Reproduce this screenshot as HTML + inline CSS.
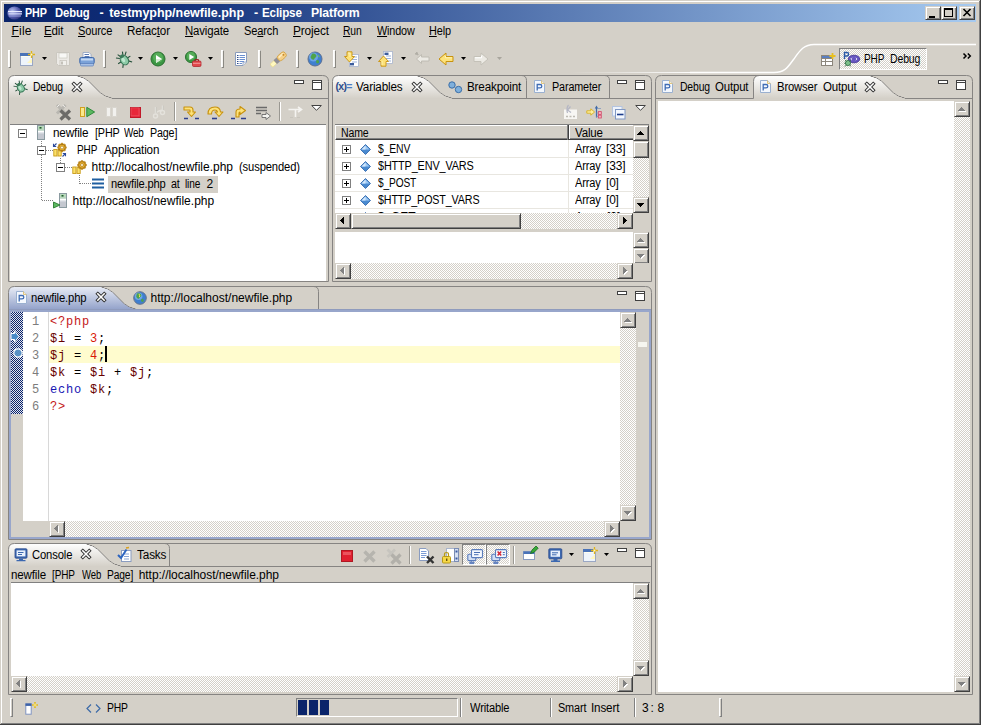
<!DOCTYPE html>
<html><head><meta charset="utf-8"><title>PHP Debug - testmyphp/newfile.php - Eclipse Platform</title>
<style>
html,body{margin:0;padding:0}
body{width:981px;height:725px;overflow:hidden;background:#d4d0c8;position:relative;font:12px/16px 'Liberation Sans', sans-serif;}
body *{position:absolute;box-sizing:border-box}
span{white-space:pre}
u{position:static;text-decoration:underline;text-underline-offset:1px}
svg{overflow:visible}
.dith{background-image:conic-gradient(#fff 25%,#d4d0c8 0 50%,#fff 0 75%,#d4d0c8 0);background-size:2px 2px}
.btn{background:#d4d0c8;border:1px solid;border-color:#d4d0c8 #404040 #404040 #d4d0c8;box-shadow:inset 1px 1px 0 #fff,inset -1px -1px 0 #808080}
</style></head>
<body>
<div style="left:0px;top:0px;width:981px;height:725px;background:#d4d0c8;"></div>
<div style="left:1px;top:1px;width:979px;height:1px;background:#fff;"></div>
<div style="left:1px;top:1px;width:1px;height:723px;background:#fff;"></div>
<div style="left:979px;top:1px;width:1px;height:723px;background:#808080;"></div>
<div style="left:1px;top:723px;width:979px;height:1px;background:#808080;"></div>
<div style="left:980px;top:0px;width:1px;height:725px;background:#404040;"></div>
<div style="left:0px;top:724px;width:981px;height:1px;background:#404040;"></div>
<div style="left:4px;top:4px;width:972px;height:18px;background:linear-gradient(to right,#0a246a 0%,#0f2d78 15%,#a6caf0 100%);"></div>
<svg style="left:7px;top:6px;" width="15" height="14" viewBox="0 0 15 14"><defs><radialGradient id="eg" cx="35%" cy="35%" r="75%"><stop offset="0" stop-color="#b9c3ee"/><stop offset=".55" stop-color="#5a63b4"/><stop offset="1" stop-color="#2b2f78"/></radialGradient></defs><ellipse cx="7.5" cy="7" rx="7.2" ry="6.6" fill="url(#eg)"/><rect x="1" y="5" width="14" height="1.2" fill="#e8ecff"/><rect x="1.5" y="7.3" width="13.5" height="1.2" fill="#dfe4ff"/><rect x="2" y="9.6" width="12" height="0.8" fill="#aeb6e8"/></svg>
<span style="left:25px;top:5px;font:bold 12.5px/16px 'Liberation Sans', sans-serif;color:#fff;letter-spacing:-0.15px;transform:scaleX(0.8582);transform-origin:0 0;">PHP</span>
<span style="left:55px;top:5px;font:bold 12.5px/16px 'Liberation Sans', sans-serif;color:#fff;letter-spacing:-0.15px;transform:scaleX(0.9036);transform-origin:0 0;">Debug</span>
<span style="left:99.4px;top:5px;font:bold 12.5px/16px 'Liberation Sans', sans-serif;color:#fff;">-</span>
<span style="left:109.2px;top:5px;font:bold 12.5px/16px 'Liberation Sans', sans-serif;color:#fff;letter-spacing:-0.03px;">testmyphp/newfile.php</span>
<span style="left:253.9px;top:5px;font:bold 12.5px/16px 'Liberation Sans', sans-serif;color:#fff;">-</span>
<span style="left:261.9px;top:5px;font:bold 12.5px/16px 'Liberation Sans', sans-serif;color:#fff;letter-spacing:-0.15px;transform:scaleX(0.9305);transform-origin:0 0;">Eclipse</span>
<span style="left:310.8px;top:5px;font:bold 12.5px/16px 'Liberation Sans', sans-serif;color:#fff;letter-spacing:-0.15px;transform:scaleX(0.9828);transform-origin:0 0;">Platform</span>
<div class="btn" style="left:925px;top:6px;width:16px;height:14px"></div>
<div class="btn" style="left:941px;top:6px;width:16px;height:14px"></div>
<div class="btn" style="left:959px;top:6px;width:16px;height:14px"></div>
<div style="left:929px;top:16px;width:6px;height:2px;background:#000;"></div>
<div style="left:944px;top:8px;width:9px;height:9px;border:1px solid #000;border-top-width:2px"></div>
<svg style="left:963px;top:9px;" width="8" height="7" viewBox="0 0 8 7"><path d="M0.5 0 L7.5 7 M7.5 0 L0.5 7" stroke="#000" stroke-width="1.6"/></svg>
<span style="left:11.4px;top:23px;font:normal 12px/16px 'Liberation Sans', sans-serif;color:#000;letter-spacing:0.25px;"><u>F</u>ile</span>
<span style="left:44px;top:23px;font:normal 12px/16px 'Liberation Sans', sans-serif;color:#000;letter-spacing:-0.15px;transform:scaleX(0.9636);transform-origin:0 0;"><u>E</u>dit</span>
<span style="left:77.7px;top:23px;font:normal 12px/16px 'Liberation Sans', sans-serif;color:#000;letter-spacing:-0.15px;transform:scaleX(0.92);transform-origin:0 0;"><u>S</u>ource</span>
<span style="left:127px;top:23px;font:normal 12px/16px 'Liberation Sans', sans-serif;color:#000;letter-spacing:-0.15px;transform:scaleX(0.9704);transform-origin:0 0;">Refac<u>t</u>or</span>
<span style="left:185px;top:23px;font:normal 12px/16px 'Liberation Sans', sans-serif;color:#000;letter-spacing:-0.15px;transform:scaleX(0.9498);transform-origin:0 0;"><u>N</u>avigate</span>
<span style="left:243.6px;top:23px;font:normal 12px/16px 'Liberation Sans', sans-serif;color:#000;letter-spacing:-0.15px;transform:scaleX(0.9227);transform-origin:0 0;">Se<u>a</u>rch</span>
<span style="left:293px;top:23px;font:normal 12px/16px 'Liberation Sans', sans-serif;color:#000;letter-spacing:-0.15px;transform:scaleX(0.9874);transform-origin:0 0;"><u>P</u>roject</span>
<span style="left:343.3px;top:23px;font:normal 12px/16px 'Liberation Sans', sans-serif;color:#000;letter-spacing:-0.15px;transform:scaleX(0.8611);transform-origin:0 0;"><u>R</u>un</span>
<span style="left:376.7px;top:23px;font:normal 12px/16px 'Liberation Sans', sans-serif;color:#000;letter-spacing:-0.15px;transform:scaleX(0.9013);transform-origin:0 0;"><u>W</u>indow</span>
<span style="left:429px;top:23px;font:normal 12px/16px 'Liberation Sans', sans-serif;color:#000;letter-spacing:-0.15px;transform:scaleX(0.9077);transform-origin:0 0;"><u>H</u>elp</span>
<div style="left:8px;top:50px;width:3px;height:18px;background:#f6f5f2;border-left:1px solid #fff;border-top:1px solid #fff;border-right:1px solid #8a8882;border-bottom:1px solid #8a8882"></div>
<div style="left:103px;top:50px;width:3px;height:18px;background:#f6f5f2;border-left:1px solid #fff;border-top:1px solid #fff;border-right:1px solid #8a8882;border-bottom:1px solid #8a8882"></div>
<div style="left:221px;top:50px;width:3px;height:18px;background:#f6f5f2;border-left:1px solid #fff;border-top:1px solid #fff;border-right:1px solid #8a8882;border-bottom:1px solid #8a8882"></div>
<div style="left:258px;top:50px;width:3px;height:18px;background:#f6f5f2;border-left:1px solid #fff;border-top:1px solid #fff;border-right:1px solid #8a8882;border-bottom:1px solid #8a8882"></div>
<div style="left:296px;top:50px;width:3px;height:18px;background:#f6f5f2;border-left:1px solid #fff;border-top:1px solid #fff;border-right:1px solid #8a8882;border-bottom:1px solid #8a8882"></div>
<div style="left:333px;top:50px;width:3px;height:18px;background:#f6f5f2;border-left:1px solid #fff;border-top:1px solid #fff;border-right:1px solid #8a8882;border-bottom:1px solid #8a8882"></div>
<svg style="left:19px;top:51px;" width="16" height="16" viewBox="0 0 16 16"><rect x="1.5" y="2.5" width="12" height="12" fill="#fffef0" stroke="#9aa7c4"/><rect x="1" y="2" width="10" height="3" fill="#4a73b8"/><rect x="2" y="6" width="11" height="8" fill="#eef4fb"/><path d="M8 12 L13 12 L13 7 Z" fill="#fff6c0"/><path d="M12.5 0 V7 M9 3.5 H16" stroke="#e0b418" stroke-width="1.3"/><path d="M11.5 2.5 L13.5 4.5 M13.5 2.5 L11.5 4.5" stroke="#f0d050" stroke-width="0.9"/><circle cx="12.5" cy="3.5" r="1" fill="#fffbd0"/></svg>
<svg style="left:42px;top:57px;" width="5" height="3" viewBox="0 0 5 3"><path d="M0 0 H5 L2.5 3 Z" fill="#000"/></svg>
<svg style="left:55px;top:51px;" width="16" height="16" viewBox="0 0 16 16"><path d="M1.5 1.5 H14.5 V14.5 H3.5 L1.5 12.5 Z" fill="#eceae6" stroke="#cbc8c0"/><rect x="4" y="2" width="8" height="5" fill="#f8f8f6" stroke="#c4c1b9" stroke-width=".6"/><rect x="5" y="9.5" width="6.5" height="5" fill="#f1f0ec" stroke="#bcb9b1" stroke-width=".6"/><rect x="6" y="10.5" width="2" height="3" fill="#c4c1b9"/></svg>
<svg style="left:79px;top:51px;" width="16" height="16" viewBox="0 0 16 16"><path d="M4 7 V1.5 H10 L12 3.5 V7 Z" fill="#fff" stroke="#8da0c0" stroke-width=".8"/><path d="M5.5 3.5 H10 M5.5 5.5 H10.5" stroke="#5a78b0" stroke-width="1"/><rect x="0.8" y="6.5" width="14.4" height="6.5" rx="1.5" fill="#7ba2d8" stroke="#3d68ac"/><rect x="2" y="7.5" width="12" height="2" fill="#c4d8f2"/><rect x="1.5" y="12.5" width="13" height="2.5" rx="1" fill="#a8c0e4" stroke="#5a80bc" stroke-width=".7"/></svg>
<svg style="left:116px;top:51px;" width="16" height="16" viewBox="0 0 16 16"><g transform="rotate(-32 8 8.5)"><g stroke="#24503a" stroke-width="1.1" fill="none"><path d="M5 5.5 L2 3 M11 5.5 L14 3 M4 9 H0.8 M12 9 H15.2 M5 12 L2.5 15 M11 12 L13.5 15 M6.5 4 L5.2 1 M9.5 4 L10.8 1"/></g><ellipse cx="8" cy="9.3" rx="3.9" ry="4.9" fill="#8ccaa6" stroke="#2e6e4e" stroke-width="1"/><ellipse cx="8" cy="4.6" rx="2.4" ry="1.7" fill="#3c7a5a"/><ellipse cx="7.2" cy="8.6" rx="1.6" ry="2.4" fill="#cdeedb" opacity=".8"/></g></svg>
<svg style="left:138px;top:57px;" width="5" height="3" viewBox="0 0 5 3"><path d="M0 0 H5 L2.5 3 Z" fill="#000"/></svg>
<svg style="left:150px;top:51px;" width="16" height="16" viewBox="0 0 16 16"><circle cx="8" cy="8" r="7" fill="#3b9643" stroke="#2a6e30" stroke-width="1"/><circle cx="8" cy="6.6" r="5" fill="#6cc06a" opacity=".55"/><path d="M6 4 L12 8 L6 12 Z" fill="#fff"/><path d="M6 8 L12 8 L6 12 Z" fill="#d4ecd4"/></svg>
<svg style="left:173px;top:57px;" width="5" height="3" viewBox="0 0 5 3"><path d="M0 0 H5 L2.5 3 Z" fill="#000"/></svg>
<svg style="left:185px;top:51px;" width="16" height="16" viewBox="0 0 16 16"><circle cx="6" cy="6" r="5.6" fill="#3b9643" stroke="#2a6e30" stroke-width=".9"/><circle cx="6" cy="5" r="4" fill="#6cc06a" opacity=".55"/><path d="M4.3 3 L9.2 6 L4.3 9 Z" fill="#fff"/><rect x="7.5" y="10" width="8.5" height="5.5" rx="1.2" fill="#e0484c" stroke="#b02a30" stroke-width=".8"/><path d="M10 10 V8.6 H13.5 V10" fill="none" stroke="#9a1c20" stroke-width="1"/><rect x="8" y="11.8" width="7.5" height="1" fill="#f49a9a"/></svg>
<svg style="left:208px;top:57px;" width="5" height="3" viewBox="0 0 5 3"><path d="M0 0 H5 L2.5 3 Z" fill="#000"/></svg>
<svg style="left:233px;top:51px;" width="16" height="16" viewBox="0 0 16 16"><path d="M2.5 1.5 H13.5 V11 L10 14.5 H2.5 Z" fill="#fff" stroke="#8a9cbc"/><path d="M13.5 11 H10 V14.5" fill="#e6ecf6" stroke="#8a9cbc" stroke-width=".8"/><path d="M6.5 4.5 H12 M6.5 6.5 H12 M6.5 8.5 H12 M6.5 10.5 H11 M6.5 12.5 H9" stroke="#6a8fd0" stroke-width="1"/><path d="M4 4.5 H5.5 M4 6.5 H5.5 M4 8.5 H5.5 M4 10.5 H5.5 M4 12.5 H5.5" stroke="#2c4a8a" stroke-width="1"/></svg>
<svg style="left:270px;top:51px;" width="16" height="16" viewBox="0 0 16 16"><g transform="rotate(-42 8.5 8)"><path d="M-1 6.2 H4 V10.2 H-1 Q-2 8.2 -1 6.2 Z" fill="#fff8c0" stroke="#ecdc84" stroke-width=".6"/><rect x="4" y="5.6" width="4" height="5.2" fill="#908e96"/><rect x="8" y="5.2" width="9.5" height="6" rx="2.6" fill="#f6d088" stroke="#d0a040" stroke-width=".8"/><rect x="9.5" y="6.2" width="6.5" height="1.6" rx=".8" fill="#fdecc0"/><circle cx="15" cy="8.2" r="1" fill="#c88a28"/></g></svg>
<svg style="left:307px;top:51px;" width="16" height="16" viewBox="0 0 16 16"><circle cx="8" cy="8" r="7" fill="#3f7fd0" stroke="#5d6f90" stroke-width="1"/><circle cx="6.5" cy="6" r="4.5" fill="#79b0ec" opacity=".75"/><path d="M5 3 C7 2 9 3 9.5 5 C9 7 7.5 6.5 7 8.5 C6 9.5 4 8 3.5 6 Z" fill="#4ea34a"/><path d="M9.5 9 C11.5 8.5 12.5 10 12 11.5 C11 13 9.5 12.5 9 11 Z" fill="#4ea34a"/><path d="M10.5 3.5 C12 4 13 5.5 12.5 6.5 C11.5 6.5 10.5 5 10.5 3.5Z" fill="#6dbb5e"/></svg>
<svg style="left:344px;top:51px;" width="16" height="16" viewBox="0 0 16 16"><rect x="5.5" y="3.5" width="9" height="12" fill="#fff" stroke="#a8b4cc" stroke-width=".8"/><path d="M8 6 H13 M8 8.5 H13 M8 11 H13" stroke="#9db3dc" stroke-width="1"/><rect x="6" y="12" width="4" height="2.4" fill="#3c5c9c"/><path d="M3 0.8 H8 V5.5 H10.5 L5.5 11 L0.5 5.5 H3 Z" fill="#fde27a" stroke="#c8920e" stroke-width=".9"/><path d="M4 2 H6 V6" stroke="#fff3b0" stroke-width="1" fill="none"/></svg>
<svg style="left:367px;top:57px;" width="5" height="3" viewBox="0 0 5 3"><path d="M0 0 H5 L2.5 3 Z" fill="#000"/></svg>
<svg style="left:378px;top:51px;" width="16" height="16" viewBox="0 0 16 16"><rect x="5.5" y="0.5" width="9" height="12" fill="#fff" stroke="#a8b4cc" stroke-width=".8"/><path d="M8 5 H13 M8 7.5 H13 M8 10 H13" stroke="#9db3dc" stroke-width="1"/><rect x="6.5" y="1.6" width="4" height="2.4" fill="#3c5c9c"/><path d="M3 15.2 H8 V10.5 H10.5 L5.5 5 L0.5 10.5 H3 Z" fill="#fde27a" stroke="#c8920e" stroke-width=".9"/><path d="M4 14 V10" stroke="#fff3b0" stroke-width="1" fill="none"/></svg>
<svg style="left:401px;top:57px;" width="5" height="3" viewBox="0 0 5 3"><path d="M0 0 H5 L2.5 3 Z" fill="#000"/></svg>
<svg style="left:414px;top:51px;" width="16" height="16" viewBox="0 0 16 16"><path d="M15 6 H7.5 V3.5 L2.5 8 L7.5 12.5 V10 H15 Z" fill="#eceae4" stroke="#bcb9b0" stroke-width=".9"/><path d="M1 3 L3 1 L4 4 Z M2.5 1.5 L4.5 3.5" fill="#b0ada5" stroke="#b0ada5" stroke-width=".7"/></svg>
<svg style="left:438px;top:51px;" width="16" height="16" viewBox="0 0 16 16"><path d="M15 5.5 H8 V2 L1 8 L8 14 V10.5 H15 Z" fill="#fde27a" stroke="#c8920e" stroke-width="1"/><path d="M14 6.8 H7.5 V4.5" stroke="#fff3b0" stroke-width="1" fill="none"/></svg>
<svg style="left:461px;top:57px;" width="5" height="3" viewBox="0 0 5 3"><path d="M0 0 H5 L2.5 3 Z" fill="#000"/></svg>
<svg style="left:473px;top:51px;" width="16" height="16" viewBox="0 0 16 16"><path d="M1 5.5 H8 V2 L15 8 L8 14 V10.5 H1 Z" fill="#eceae4" stroke="#c4c1b8" stroke-width="1"/><path d="M2 6.8 H8.5 V4.5" stroke="#fff" stroke-width="1" fill="none"/></svg>
<svg style="left:497px;top:57px;" width="5" height="3" viewBox="0 0 5 3"><path d="M0 0 H5 L2.5 3 Z" fill="#a8a59d"/></svg>
<svg style="left:0px;top:0px;" width="981" height="80" viewBox="0 0 981 80"><path d="M690 72.5 H774 C785 72.5 788 67 793.5 59.5 C799 52 803 44.5 814 44.5 H976" fill="none" stroke="#fff" stroke-width="1.4"/></svg>
<div style="left:570px;top:72px;width:121px;height:1px;background:linear-gradient(to right,rgba(255,255,255,0),rgba(255,255,255,.95));height:1.4px;"></div>
<svg style="left:821px;top:53px;" width="15" height="14" viewBox="0 0 15 14"><rect x="0.5" y="2.5" width="11" height="10" fill="#fff" stroke="#8c867c"/><rect x="1" y="3" width="10" height="2" fill="#5a7fc0"/><path d="M4.5 5 V12.5 M0.5 8.5 H11.5 M0.5 5.5 H11.5" stroke="#8c867c" stroke-width="1"/><path d="M11.5 0 V6 M8.5 3 H14.5" stroke="#e8c020" stroke-width="1.8"/></svg>
<div class="dith" style="left:839px;top:48px;width:88px;height:22px;border:1px solid;border-color:#808080 #fff #fff #808080"></div>
<svg style="left:843px;top:51px;" width="17" height="16" viewBox="0 0 17 16"><path d="M1.5 8 V1.5 H4 Q5.6 1.5 5.6 3.2 Q5.6 5 4 5 H1.5" fill="none" stroke="#2c5aa8" stroke-width="1.4"/><ellipse cx="11" cy="8" rx="5.8" ry="3.8" fill="#6656c0" stroke="#3d2f92" stroke-width=".8"/><path d="M9 6.8 L7.8 8 L9 9.2 M12.8 6.8 L14 8 L12.8 9.2" stroke="#fff" stroke-width=".8" fill="none"/><circle cx="5" cy="12" r="2.6" fill="#7cc08a" stroke="#2e6e42" stroke-width=".8"/><path d="M2 9 L3.4 10.4 M8 9.2 L6.6 10.5 M1.2 12.3 H2.4 M2 15.5 L3.3 14 M8 15.3 L6.7 14" stroke="#2e5e3a" stroke-width=".8"/></svg>
<span style="left:863.7px;top:51px;font:normal 12px/16px 'Liberation Sans', sans-serif;color:#000;letter-spacing:-0.15px;transform:scaleX(0.8324);transform-origin:0 0;">PHP</span>
<span style="left:889.9px;top:51px;font:normal 12px/16px 'Liberation Sans', sans-serif;color:#000;letter-spacing:-0.15px;transform:scaleX(0.8742);transform-origin:0 0;">Debug</span>
<svg style="left:963px;top:53px;" width="9" height="6" viewBox="0 0 9 6"><path d="M0.5 0.5 L3 3 L0.5 5.5 M4.8 0.5 L7.3 3 L4.8 5.5" stroke="#000" stroke-width="1.5" fill="none"/></svg>
<svg style="left:8px;top:75px;" width="321" height="207" viewBox="0 0 321 207"><defs><linearGradient id="gd" x1="0" y1="0" x2="0" y2="1"><stop offset="0" stop-color="#ffffff"/><stop offset="1" stop-color="#d4d0c8"/></linearGradient></defs><path d="M0.5 23.5 V6.5 Q0.5 0.5 6.5 0.5 L70.0 0.5 L70.0 1.5 L72.0 1.5 L73.0 2.5 L75.0 2.5 L76.0 3.5 L77.0 3.5 L79.0 5.5 L80.0 5.5 L81.0 6.5 L92.0 17.5 L93.0 18.5 L94.0 18.5 L96.0 20.5 L97.0 20.5 L98.0 21.5 L100.0 21.5 L101.0 22.5 L103.0 22.5 L104.0 23.5 Z" fill="url(#gd)"/><path d="M0.5 206.5 V6.5 Q0.5 0.5 6.5 0.5 H314.5 Q320.5 0.5 320.5 6.5 V206.5 Z" fill="none" stroke="#868482"/><path d="M70.0 0.5 L70.0 0.5 L70.0 1.5 L72.0 1.5 L73.0 2.5 L75.0 2.5 L76.0 3.5 L77.0 3.5 L79.0 5.5 L80.0 5.5 L81.0 6.5 L92.0 17.5 L93.0 18.5 L94.0 18.5 L96.0 20.5 L97.0 20.5 L98.0 21.5 L100.0 21.5 L101.0 22.5 L103.0 22.5 L104.0 23.5 H320.5" fill="none" stroke="#868482"/></svg>
<svg style="left:13px;top:80px;" width="15" height="14" viewBox="0 0 16 16"><g transform="rotate(-32 8 8.5)"><g stroke="#24503a" stroke-width="1.1" fill="none"><path d="M5 5.5 L2 3 M11 5.5 L14 3 M4 9 H0.8 M12 9 H15.2 M5 12 L2.5 15 M11 12 L13.5 15 M6.5 4 L5.2 1 M9.5 4 L10.8 1"/></g><ellipse cx="8" cy="9.3" rx="3.9" ry="4.9" fill="#8ccaa6" stroke="#2e6e4e" stroke-width="1"/><ellipse cx="8" cy="4.6" rx="2.4" ry="1.7" fill="#3c7a5a"/><ellipse cx="7.2" cy="8.6" rx="1.6" ry="2.4" fill="#cdeedb" opacity=".8"/></g></svg>
<span style="left:32.6px;top:79px;font:normal 12px/16px 'Liberation Sans', sans-serif;color:#000;letter-spacing:-0.15px;transform:scaleX(0.8656);transform-origin:0 0;">Debug</span>
<svg style="left:72px;top:82px;" width="10" height="10" viewBox="0 0 10 10"><g stroke-linecap="square"><path d="M1.8 1.8 L8.2 8.2 M8.2 1.8 L1.8 8.2" stroke="#303030" stroke-width="3.4"/><path d="M1.8 1.8 L8.2 8.2 M8.2 1.8 L1.8 8.2" stroke="#fff" stroke-width="1.6"/></g></svg>
<svg style="left:294px;top:80px;" width="10" height="4" viewBox="0 0 10 4"><rect x="0.5" y="0.5" width="9" height="3" fill="#fff" stroke="#404040"/></svg>
<svg style="left:312px;top:80px;" width="10" height="10" viewBox="0 0 10 10"><rect x="0.5" y="0.5" width="9" height="9" fill="#fff" stroke="#404040"/><rect x="0.5" y="0.5" width="9" height="2" fill="#fff" stroke="#404040"/></svg>
<svg style="left:56px;top:104px;" width="16" height="16" viewBox="0 0 16 16"><g stroke="#b9b7b1" stroke-width="3" stroke-linecap="square"><path d="M2 2 L8.5 8.5 M8.5 2 L2 8.5"/></g><g stroke="#f4f3f0" stroke-width="1" stroke-linecap="square"><path d="M1.5 2.5 L3 1 M7 1.2 L8.8 3"/></g><g stroke="#6c6b68" stroke-width="3.2" stroke-linecap="butt"><path d="M4.5 6.5 L14 15.5 M14 6.5 L4.5 15.5"/></g></svg>
<svg style="left:80px;top:104px;" width="16" height="16" viewBox="0 0 16 16"><rect x="0.5" y="3.5" width="4" height="9" fill="#fbe88a" stroke="#d0a020"/><path d="M6.8 3.3 L14.6 8 L6.8 12.7 Z" fill="#5cb860" stroke="#2e8a3a" stroke-width="1"/></svg>
<svg style="left:104px;top:104px;" width="16" height="16" viewBox="0 0 16 16"><rect x="2.5" y="3.5" width="4" height="9" fill="#f2f1ee" stroke="#d9d6cf"/><rect x="8.5" y="3.5" width="4" height="9" fill="#f2f1ee" stroke="#d9d6cf"/></svg>
<svg style="left:128px;top:104px;" width="16" height="16" viewBox="0 0 16 16"><rect x="2.5" y="3.5" width="10" height="10" fill="#e8283a" stroke="#c01828" stroke-width="1"/><rect x="2.5" y="3.5" width="10" height="10" fill="none" stroke="#f08088" stroke-width="1" opacity=".5" transform="translate(1,1) scale(0.8)"/></svg>
<svg style="left:151px;top:104px;" width="16" height="16" viewBox="0 0 16 16"><g stroke="#e4e2dc" stroke-width="1.4" fill="none"><path d="M4.5 3 V9 M11.5 6 V1.5 M4.5 9 L8 7 L11.5 6"/><circle cx="4.5" cy="12" r="2"/><circle cx="11.5" cy="8.5" r="2"/></g><g stroke="#c4c1ba" stroke-width=".7" fill="none"><path d="M5.3 3 V9 M12.3 6 V1.5"/></g></svg>
<div style="left:174px;top:102px;width:2px;height:19px;background:#9a9892;border-right:1px solid #fff"></div>
<svg style="left:183px;top:104px;" width="16" height="16" viewBox="0 0 16 16"><path d="M1 3 H7 Q10 3 10 6 V8 H12.5 L8.5 12.5 L4.5 8 H7 V6 H1 Z" fill="#fde27a" stroke="#c8920e" stroke-width="1.1" stroke-linejoin="round"/><path d="M1 14.5 H5 M12 14.5 H16" stroke="#2c3f8c" stroke-width="1.6"/></svg>
<svg style="left:207px;top:104px;" width="16" height="16" viewBox="0 0 16 16"><path d="M1 10 Q1 3 8 3 Q13 3 13.5 8 H16 L12 12.5 L8 8 H10.5 Q10 6 8 6 Q4.5 6 4.5 10 Z" fill="#fde27a" stroke="#c8920e" stroke-width="1.1" stroke-linejoin="round"/><path d="M5 14.5 H10" stroke="#2c3f8c" stroke-width="1.6"/></svg>
<svg style="left:231px;top:104px;" width="16" height="16" viewBox="0 0 16 16"><path d="M5 13 V8 Q5 5 9 5 V2.5 L14.5 6.5 L9 10.5 V8 Q8 8 8 9 V13 Z" fill="#fde27a" stroke="#c8920e" stroke-width="1.1" stroke-linejoin="round"/><path d="M0 14.5 H4 M10 14.5 H15" stroke="#2c3f8c" stroke-width="1.6"/></svg>
<svg style="left:255px;top:104px;" width="16" height="16" viewBox="0 0 16 16"><path d="M1 3.5 H12 M1 6.5 H12 M1 9.5 H6" stroke="#6a6a6a" stroke-width="1.6"/><path d="M7 10.5 H11 V8.5 L15.5 12 L11 15.5 V13.5 H7 Z" fill="#f4f4f0" stroke="#6a6a6a" stroke-width=".9"/></svg>
<div style="left:279px;top:102px;width:2px;height:19px;background:#9a9892;border-right:1px solid #fff"></div>
<svg style="left:287px;top:104px;" width="16" height="16" viewBox="0 0 16 16"><path d="M1.5 5.5 H14.5 M8.5 5.5 V13 M11 3 L14.5 5.5 L11 8" stroke="#f4f3f0" stroke-width="1.6" fill="none"/><path d="M3 13.5 H6 M10 13.5 H13" stroke="#c8c5bd" stroke-width="1.2"/></svg>
<svg style="left:311px;top:105px;" width="11" height="6" viewBox="0 0 11 6"><path d="M0.7 0.5 H10.3 L5.5 5.3 Z" fill="#fff" stroke="#404040" stroke-width="1"/></svg>
<div style="left:10px;top:124px;width:316px;height:1px;background:#808080;"></div>
<div style="left:10px;top:125px;width:316px;height:156px;background:#fff;"></div>
<svg style="left:0px;top:0px;" width="981" height="725" viewBox="0 0 981 725"><g stroke="#808080" stroke-width="1" stroke-dasharray="1 1" fill="none"><path d="M41.5 141 V201 M42 200.5 H53"/><path d="M46 150.5 H53"/><path d="M60.5 158 V163"/><path d="M65 167.5 H72"/><path d="M79.5 175 V184 M80 183.5 H92"/></g></svg>
<svg style="left:18px;top:129px;" width="9" height="9" viewBox="0 0 9 9"><rect x="0.5" y="0.5" width="8" height="8" fill="#fff" stroke="#808080"/><path d="M2 4.5 H7" stroke="#000"/></svg>
<svg style="left:37px;top:125px;" width="8" height="15" viewBox="0 0 8 15"><rect x="0.5" y="0.5" width="7" height="14" fill="#dfe3e8" stroke="#8a9aa0"/><rect x="1" y="1" width="6" height="4.5" fill="#b8d8bc"/><rect x="2.5" y="2" width="2" height="1.6" fill="#1f5e2c"/><rect x="1" y="6" width="6" height="1.2" fill="#fff"/><rect x="1" y="8.5" width="6" height="5.5" fill="#c4c8d0"/></svg>
<span style="left:53.4px;top:124.5px;font:normal 12px/16px 'Liberation Sans', sans-serif;color:#000;letter-spacing:-0.15px;transform:scaleX(0.9764);transform-origin:0 0;">newfile</span>
<span style="left:94.5px;top:124.5px;font:normal 12px/16px 'Liberation Sans', sans-serif;color:#000;letter-spacing:-0.15px;transform:scaleX(0.896);transform-origin:0 0;">[PHP</span>
<span style="left:124.2px;top:124.5px;font:normal 12px/16px 'Liberation Sans', sans-serif;color:#000;letter-spacing:-0.15px;transform:scaleX(0.8192);transform-origin:0 0;">Web</span>
<span style="left:150.2px;top:124.5px;font:normal 12px/16px 'Liberation Sans', sans-serif;color:#000;letter-spacing:-0.15px;transform:scaleX(0.8908);transform-origin:0 0;">Page]</span>
<svg style="left:37px;top:146px;" width="9" height="9" viewBox="0 0 9 9"><rect x="0.5" y="0.5" width="8" height="8" fill="#fff" stroke="#808080"/><path d="M2 4.5 H7" stroke="#000"/></svg>
<svg style="left:53px;top:143px;" width="16" height="15" viewBox="0 0 16 15"><rect x="0.8" y="6.5" width="3.2" height="6.5" fill="#fbe06a" stroke="#c89a18" stroke-width=".9"/><rect x="5.0" y="6.5" width="3.2" height="6.5" fill="#fbe06a" stroke="#c89a18" stroke-width=".9"/><circle cx="12.20" cy="4.50" r="1.25" fill="#e8a820" stroke="#9a6a10" stroke-width=".5"/><circle cx="11.26" cy="6.76" r="1.25" fill="#e8a820" stroke="#9a6a10" stroke-width=".5"/><circle cx="9.00" cy="7.70" r="1.25" fill="#e8a820" stroke="#9a6a10" stroke-width=".5"/><circle cx="6.74" cy="6.76" r="1.25" fill="#e8a820" stroke="#9a6a10" stroke-width=".5"/><circle cx="5.80" cy="4.50" r="1.25" fill="#e8a820" stroke="#9a6a10" stroke-width=".5"/><circle cx="6.74" cy="2.24" r="1.25" fill="#e8a820" stroke="#9a6a10" stroke-width=".5"/><circle cx="9.00" cy="1.30" r="1.25" fill="#e8a820" stroke="#9a6a10" stroke-width=".5"/><circle cx="11.26" cy="2.24" r="1.25" fill="#e8a820" stroke="#9a6a10" stroke-width=".5"/><circle cx="9" cy="4.5" r="3.2" fill="#f2b830" stroke="#9a6a10" stroke-width=".8"/><circle cx="9" cy="4.5" r="1.5" fill="#fff6d8" stroke="#9a6a10" stroke-width=".6"/><path d="M0.5 3.5 L3.5 0.5 M0.5 0.8 V3.5 H3.2" stroke="#2c4a9c" stroke-width="1.1" fill="none"/><path d="M9.5 13.5 L12.5 10.5 M12.5 13.2 V10.5 H9.8" stroke="#2c4a9c" stroke-width="1.1" fill="none"/></svg>
<span style="left:77.4px;top:141.5px;font:normal 12px/16px 'Liberation Sans', sans-serif;color:#000;letter-spacing:-0.15px;transform:scaleX(0.8324);transform-origin:0 0;">PHP</span>
<span style="left:103.8px;top:141.5px;font:normal 12px/16px 'Liberation Sans', sans-serif;color:#000;letter-spacing:-0.15px;transform:scaleX(0.9682);transform-origin:0 0;">Application</span>
<svg style="left:56px;top:163px;" width="9" height="9" viewBox="0 0 9 9"><rect x="0.5" y="0.5" width="8" height="8" fill="#fff" stroke="#808080"/><path d="M2 4.5 H7" stroke="#000"/></svg>
<svg style="left:72px;top:160px;" width="16" height="15" viewBox="0 0 16 15"><rect x="0.8" y="7" width="3.2" height="6.5" fill="#fbe06a" stroke="#c89a18" stroke-width=".9"/><rect x="5.0" y="7" width="3.2" height="6.5" fill="#fbe06a" stroke="#c89a18" stroke-width=".9"/><circle cx="13.30" cy="5.00" r="1.25" fill="#e8a820" stroke="#9a6a10" stroke-width=".5"/><circle cx="12.33" cy="7.33" r="1.25" fill="#e8a820" stroke="#9a6a10" stroke-width=".5"/><circle cx="10.00" cy="8.30" r="1.25" fill="#e8a820" stroke="#9a6a10" stroke-width=".5"/><circle cx="7.67" cy="7.33" r="1.25" fill="#e8a820" stroke="#9a6a10" stroke-width=".5"/><circle cx="6.70" cy="5.00" r="1.25" fill="#e8a820" stroke="#9a6a10" stroke-width=".5"/><circle cx="7.67" cy="2.67" r="1.25" fill="#e8a820" stroke="#9a6a10" stroke-width=".5"/><circle cx="10.00" cy="1.70" r="1.25" fill="#e8a820" stroke="#9a6a10" stroke-width=".5"/><circle cx="12.33" cy="2.67" r="1.25" fill="#e8a820" stroke="#9a6a10" stroke-width=".5"/><circle cx="10" cy="5" r="3.3" fill="#f2b830" stroke="#9a6a10" stroke-width=".8"/><circle cx="10" cy="5" r="1.5" fill="#fff6d8" stroke="#9a6a10" stroke-width=".6"/></svg>
<span style="left:91.6px;top:158.5px;font:normal 12px/16px 'Liberation Sans', sans-serif;color:#000;">http://localhost/newfile.php</span>
<span style="left:238.7px;top:158.5px;font:normal 12px/16px 'Liberation Sans', sans-serif;color:#000;letter-spacing:-0.15px;transform:scaleX(0.9353);transform-origin:0 0;">(suspended)</span>
<svg style="left:92px;top:178px;" width="12" height="11" viewBox="0 0 12 11"><path d="M0 1.5 H12 M0 5.5 H12 M0 9.5 H12" stroke="#1f5ea0" stroke-width="2"/></svg>
<div style="left:108px;top:176px;width:110px;height:17px;background:#d4d0c8;"></div>
<span style="left:111px;top:175.5px;font:normal 12px/16px 'Liberation Sans', sans-serif;color:#000;letter-spacing:-0.15px;transform:scaleX(0.9254);transform-origin:0 0;">newfile.php</span>
<span style="left:171.1px;top:175.5px;font:normal 12px/16px 'Liberation Sans', sans-serif;color:#000;letter-spacing:-0.15px;transform:scaleX(0.892);transform-origin:0 0;">at</span>
<span style="left:185.2px;top:175.5px;font:normal 12px/16px 'Liberation Sans', sans-serif;color:#000;letter-spacing:-0.15px;transform:scaleX(0.8389);transform-origin:0 0;">line</span>
<span style="left:206.4px;top:175.5px;font:normal 12px/16px 'Liberation Sans', sans-serif;color:#000;">2</span>
<svg style="left:53px;top:193px;" width="14" height="15" viewBox="0 0 14 15"><g transform="translate(6,0)"><rect x="0.5" y="0.5" width="7" height="14" fill="#dfe3e8" stroke="#8a9aa0"/><rect x="1" y="1" width="6" height="4.5" fill="#b8d8bc"/><rect x="2.5" y="2" width="2" height="1.6" fill="#1f5e2c"/><rect x="1" y="6" width="6" height="1.2" fill="#fff"/><rect x="1" y="8.5" width="6" height="5.5" fill="#c4c8d0"/></g><path d="M0.5 9 L7 12 L0.5 15 Z" fill="#5cb860" stroke="#2a7a30" stroke-width=".9"/></svg>
<span style="left:72.5px;top:192.5px;font:normal 12px/16px 'Liberation Sans', sans-serif;color:#000;letter-spacing:0.01px;">http://localhost/newfile.php</span>
<svg style="left:332px;top:75px;" width="320" height="207" viewBox="0 0 320 207"><defs><linearGradient id="gv" x1="0" y1="0" x2="0" y2="1"><stop offset="0" stop-color="#ffffff"/><stop offset="1" stop-color="#d4d0c8"/></linearGradient></defs><path d="M0.5 23.5 V6.5 Q0.5 0.5 6.5 0.5 L86.0 0.5 L86.0 1.5 L88.0 1.5 L89.0 2.5 L91.0 2.5 L92.0 3.5 L93.0 3.5 L95.0 5.5 L96.0 5.5 L97.0 6.5 L108.0 17.5 L109.0 18.5 L110.0 18.5 L112.0 20.5 L113.0 20.5 L114.0 21.5 L116.0 21.5 L117.0 22.5 L119.0 22.5 L120.0 23.5 Z" fill="url(#gv)"/><path d="M0.5 206.5 V6.5 Q0.5 0.5 6.5 0.5 H313.5 Q319.5 0.5 319.5 6.5 V206.5 Z" fill="none" stroke="#868482"/><path d="M86.0 0.5 L86.0 0.5 L86.0 1.5 L88.0 1.5 L89.0 2.5 L91.0 2.5 L92.0 3.5 L93.0 3.5 L95.0 5.5 L96.0 5.5 L97.0 6.5 L108.0 17.5 L109.0 18.5 L110.0 18.5 L112.0 20.5 L113.0 20.5 L114.0 21.5 L116.0 21.5 L117.0 22.5 L119.0 22.5 L120.0 23.5 H319.5" fill="none" stroke="#868482"/><path d="M189.5 0.5 Q194.5 0.5 194.5 5.5 V23.5" fill="none" stroke="#868482"/><path d="M272.5 0.5 Q277.5 0.5 277.5 5.5 V23.5" fill="none" stroke="#868482"/></svg>
<svg style="left:336px;top:81px;" width="17" height="11" viewBox="0 0 17 11"><text x="-0.5" y="9" font-family="Liberation Sans, sans-serif" font-size="10.5" font-weight="bold" letter-spacing="-0.7"><tspan fill="#2d4d8c">(x)</tspan><tspan fill="#4a7cc4">=</tspan></text></svg>
<span style="left:356.3px;top:79px;font:normal 12px/16px 'Liberation Sans', sans-serif;color:#000;letter-spacing:-0.15px;transform:scaleX(0.9741);transform-origin:0 0;">Variables</span>
<svg style="left:412px;top:82px;" width="10" height="10" viewBox="0 0 10 10"><g stroke-linecap="square"><path d="M1.8 1.8 L8.2 8.2 M8.2 1.8 L1.8 8.2" stroke="#303030" stroke-width="3.4"/><path d="M1.8 1.8 L8.2 8.2 M8.2 1.8 L1.8 8.2" stroke="#fff" stroke-width="1.6"/></g></svg>
<svg style="left:448px;top:81px;" width="15" height="13" viewBox="0 0 15 13"><circle cx="4" cy="4" r="3.2" fill="#7fb0dc" stroke="#3a6ea8"/><circle cx="10.5" cy="8.5" r="3.2" fill="#7fb0dc" stroke="#3a6ea8"/></svg>
<span style="left:466.7px;top:79px;font:normal 12px/16px 'Liberation Sans', sans-serif;color:#000;letter-spacing:-0.15px;transform:scaleX(0.9692);transform-origin:0 0;">Breakpoint</span>
<svg style="left:534px;top:80px;" width="11" height="13" viewBox="0 0 11 13"><path d="M0.5 0.5 H7.5 L10.5 3.5 V12.5 H0.5 Z" fill="#f4f8fe" stroke="#9ab0d0" stroke-width="1"/><path d="M7.5 0.5 V3.5 H10.5" fill="#fdf0c8" stroke="#d8b868" stroke-width=".8"/><path d="M3.2 10.5 V4.5 H6 Q7.8 4.5 7.8 6.2 Q7.8 7.9 6 7.9 H3.2" fill="none" stroke="#3f6cb4" stroke-width="1.3"/></svg>
<span style="left:551.7px;top:79px;font:normal 12px/16px 'Liberation Sans', sans-serif;color:#000;letter-spacing:-0.15px;transform:scaleX(0.8991);transform-origin:0 0;">Parameter</span>
<svg style="left:617px;top:80px;" width="10" height="4" viewBox="0 0 10 4"><rect x="0.5" y="0.5" width="9" height="3" fill="#fff" stroke="#404040"/></svg>
<svg style="left:635px;top:80px;" width="10" height="10" viewBox="0 0 10 10"><rect x="0.5" y="0.5" width="9" height="9" fill="#fff" stroke="#404040"/><rect x="0.5" y="0.5" width="9" height="2" fill="#fff" stroke="#404040"/></svg>
<svg style="left:563px;top:104px;" width="16" height="16" viewBox="0 0 16 16"><rect x="1" y="5.5" width="13" height="9.5" fill="#f7f6f3"/><path d="M3 12.5 H5 M6.5 12.5 H8.5 M10 12.5 H12" stroke="#bdbab2" stroke-width="1.6"/><path d="M5.5 1 Q3 4 4.5 9 M7.5 2.5 L4.5 6 L8 8.5" stroke="#b4b6c4" stroke-width="1.2" fill="none"/></svg>
<svg style="left:586px;top:104px;" width="16" height="16" viewBox="0 0 16 16"><path d="M0.8 6.8 H4.8 V4.8 L8.6 8 L4.8 11.2 V9.2 H0.8 Z" fill="#fdf0a0" stroke="#d8b020" stroke-width=".9"/><path d="M10.5 3 V13.5" stroke="#3f6aa8" stroke-width="1.2"/><path d="M8.8 4.6 L10.5 1.6 L12.2 4.6 Z" fill="#3f6aa8"/><path d="M10.5 9 H12.5 M10.5 12.5 H12.5 M12 4.5 H15" stroke="#8a9cc0" stroke-width=".9"/><rect x="12.3" y="7.6" width="3" height="2.8" fill="#f6b0bc" stroke="#d04868" stroke-width=".8"/><rect x="12.3" y="11.2" width="3" height="2.8" fill="#f6b0bc" stroke="#d04868" stroke-width=".8"/></svg>
<svg style="left:611px;top:105px;" width="15" height="15" viewBox="0 0 15 15"><rect x="1.5" y="1.5" width="9.5" height="9.5" fill="#eef3fb" stroke="#b4c4e0"/><rect x="4.5" y="4.5" width="9.5" height="9.5" fill="#f4f8fe" stroke="#8098c4"/><path d="M6 9.5 H12.5" stroke="#1c3c8c" stroke-width="1.6"/></svg>
<svg style="left:635px;top:105px;" width="11" height="6" viewBox="0 0 11 6"><path d="M0.7 0.5 H10.3 L5.5 5.3 Z" fill="#fff" stroke="#404040" stroke-width="1"/></svg>
<div style="left:335px;top:124px;width:314px;height:1px;background:#808080;"></div>
<div style="left:335px;top:125px;width:298px;height:15px;background:#d4d0c8;border-top:1px solid #fff;border-left:1px solid #fff;border-bottom:1px solid #404040;box-shadow:inset 0 -1px 0 #808080"></div>
<div style="left:567px;top:125px;width:2px;height:15px;background:#808080;border-right:1px solid #404040"></div>
<div style="left:569px;top:126px;width:1px;height:13px;background:#fff;"></div>
<span style="left:341.3px;top:124.5px;font:normal 12px/16px 'Liberation Sans', sans-serif;color:#000;letter-spacing:-0.15px;transform:scaleX(0.8775);transform-origin:0 0;">Name</span>
<span style="left:575px;top:124.5px;font:normal 12px/16px 'Liberation Sans', sans-serif;color:#000;letter-spacing:-0.15px;transform:scaleX(0.9585);transform-origin:0 0;">Value</span>
<div style="left:335px;top:140px;width:298px;height:73px;background:#fff;"></div>
<div style="left:335px;top:157px;width:298px;height:1px;background:#e8e6e0;"></div>
<div style="left:335px;top:174px;width:298px;height:1px;background:#e8e6e0;"></div>
<div style="left:335px;top:191px;width:298px;height:1px;background:#e8e6e0;"></div>
<div style="left:335px;top:208px;width:298px;height:1px;background:#e8e6e0;"></div>
<div style="left:568px;top:140px;width:1px;height:73px;background:#e8e6e0;"></div>
<svg style="left:342px;top:145px;" width="9" height="9" viewBox="0 0 9 9"><rect x="0.5" y="0.5" width="8" height="8" fill="#fff" stroke="#808080"/><path d="M2 4.5 H7" stroke="#000"/><path d="M4.5 2 V7" stroke="#000"/></svg>
<svg style="left:360px;top:144px;" width="11" height="11" viewBox="0 0 11 11"><path d="M5.5 0.5 L10.5 5.5 L5.5 10.5 L0.5 5.5 Z" fill="#4a8ad0" stroke="#2a62a8" stroke-width=".8"/><path d="M5.5 1.5 L9.5 5.5 H1.5 Z" fill="#9cc8f4"/><path d="M5.5 1.5 L5.5 5.5 H1.5 Z" fill="#d4e8fc"/></svg>
<span style="left:377.7px;top:140.5px;font:normal 12px/16px 'Liberation Sans', sans-serif;color:#000;letter-spacing:-0.15px;transform:scaleX(0.8629);transform-origin:0 0;">$_ENV</span>
<span style="left:575.1px;top:140.5px;font:normal 12px/16px 'Liberation Sans', sans-serif;color:#000;letter-spacing:-0.15px;transform:scaleX(0.9191);transform-origin:0 0;">Array</span>
<span style="left:606.2px;top:140.5px;font:normal 12px/16px 'Liberation Sans', sans-serif;color:#000;letter-spacing:-0.15px;transform:scaleX(0.9966);transform-origin:0 0;">[33]</span>
<svg style="left:342px;top:162px;" width="9" height="9" viewBox="0 0 9 9"><rect x="0.5" y="0.5" width="8" height="8" fill="#fff" stroke="#808080"/><path d="M2 4.5 H7" stroke="#000"/><path d="M4.5 2 V7" stroke="#000"/></svg>
<svg style="left:360px;top:161px;" width="11" height="11" viewBox="0 0 11 11"><path d="M5.5 0.5 L10.5 5.5 L5.5 10.5 L0.5 5.5 Z" fill="#4a8ad0" stroke="#2a62a8" stroke-width=".8"/><path d="M5.5 1.5 L9.5 5.5 H1.5 Z" fill="#9cc8f4"/><path d="M5.5 1.5 L5.5 5.5 H1.5 Z" fill="#d4e8fc"/></svg>
<span style="left:377.7px;top:157.5px;font:normal 12px/16px 'Liberation Sans', sans-serif;color:#000;letter-spacing:-0.15px;transform:scaleX(0.9049);transform-origin:0 0;">$HTTP_ENV_VARS</span>
<span style="left:575.1px;top:157.5px;font:normal 12px/16px 'Liberation Sans', sans-serif;color:#000;letter-spacing:-0.15px;transform:scaleX(0.9191);transform-origin:0 0;">Array</span>
<span style="left:606.2px;top:157.5px;font:normal 12px/16px 'Liberation Sans', sans-serif;color:#000;letter-spacing:-0.15px;transform:scaleX(0.9966);transform-origin:0 0;">[33]</span>
<svg style="left:342px;top:179px;" width="9" height="9" viewBox="0 0 9 9"><rect x="0.5" y="0.5" width="8" height="8" fill="#fff" stroke="#808080"/><path d="M2 4.5 H7" stroke="#000"/><path d="M4.5 2 V7" stroke="#000"/></svg>
<svg style="left:360px;top:178px;" width="11" height="11" viewBox="0 0 11 11"><path d="M5.5 0.5 L10.5 5.5 L5.5 10.5 L0.5 5.5 Z" fill="#4a8ad0" stroke="#2a62a8" stroke-width=".8"/><path d="M5.5 1.5 L9.5 5.5 H1.5 Z" fill="#9cc8f4"/><path d="M5.5 1.5 L5.5 5.5 H1.5 Z" fill="#d4e8fc"/></svg>
<span style="left:377.7px;top:174.5px;font:normal 12px/16px 'Liberation Sans', sans-serif;color:#000;letter-spacing:-0.15px;transform:scaleX(0.8458);transform-origin:0 0;">$_POST</span>
<span style="left:575.1px;top:174.5px;font:normal 12px/16px 'Liberation Sans', sans-serif;color:#000;letter-spacing:-0.15px;transform:scaleX(0.9191);transform-origin:0 0;">Array</span>
<span style="left:606.2px;top:174.5px;font:normal 12px/16px 'Liberation Sans', sans-serif;color:#000;letter-spacing:-0.15px;transform:scaleX(0.989);transform-origin:0 0;">[0]</span>
<svg style="left:342px;top:196px;" width="9" height="9" viewBox="0 0 9 9"><rect x="0.5" y="0.5" width="8" height="8" fill="#fff" stroke="#808080"/><path d="M2 4.5 H7" stroke="#000"/><path d="M4.5 2 V7" stroke="#000"/></svg>
<svg style="left:360px;top:195px;" width="11" height="11" viewBox="0 0 11 11"><path d="M5.5 0.5 L10.5 5.5 L5.5 10.5 L0.5 5.5 Z" fill="#4a8ad0" stroke="#2a62a8" stroke-width=".8"/><path d="M5.5 1.5 L9.5 5.5 H1.5 Z" fill="#9cc8f4"/><path d="M5.5 1.5 L5.5 5.5 H1.5 Z" fill="#d4e8fc"/></svg>
<span style="left:377.7px;top:191.5px;font:normal 12px/16px 'Liberation Sans', sans-serif;color:#000;letter-spacing:-0.15px;transform:scaleX(0.8935);transform-origin:0 0;">$HTTP_POST_VARS</span>
<span style="left:575.1px;top:191.5px;font:normal 12px/16px 'Liberation Sans', sans-serif;color:#000;letter-spacing:-0.15px;transform:scaleX(0.9191);transform-origin:0 0;">Array</span>
<span style="left:606.2px;top:191.5px;font:normal 12px/16px 'Liberation Sans', sans-serif;color:#000;letter-spacing:-0.15px;transform:scaleX(0.989);transform-origin:0 0;">[0]</span>
<div style="left:335px;top:209px;width:298px;height:4px;overflow:hidden"><span style="left:42.7px;top:0px;font:12px/16px 'Liberation Sans',sans-serif">$_GET</span><span style="left:240px;top:0px;font:12px/16px 'Liberation Sans',sans-serif">Array [0]</span><svg style="left:25px;top:3px" width="11" height="11" viewBox="0 0 11 11"><path d="M5.5 0.5 L10.5 5.5 L5.5 10.5 L0.5 5.5 Z" fill="#4a8ad0" stroke="#2a62a8" stroke-width=".8"/><path d="M5.5 1.5 L9.5 5.5 H1.5 Z" fill="#9cc8f4"/><path d="M5.5 1.5 L5.5 5.5 H1.5 Z" fill="#d4e8fc"/></svg></div>
<div class="dith" style="left:633px;top:125px;width:16px;height:88px"></div>
<div class="btn" style="left:633px;top:125px;width:16px;height:16px"></div>
<svg style="left:0px;top:0px;pointer-events:none;shape-rendering:crispEdges" width="981" height="725" viewBox="0 0 981 725"><rect x="640" y="131" width="1" height="1" fill="#000"/><rect x="639" y="132" width="3" height="1" fill="#000"/><rect x="638" y="133" width="5" height="1" fill="#000"/><rect x="637" y="134" width="7" height="1" fill="#000"/></svg>
<div class="btn" style="left:633px;top:197px;width:16px;height:16px"></div>
<svg style="left:0px;top:0px;pointer-events:none;shape-rendering:crispEdges" width="981" height="725" viewBox="0 0 981 725"><rect x="640" y="206" width="1" height="1" fill="#000"/><rect x="639" y="205" width="3" height="1" fill="#000"/><rect x="638" y="204" width="5" height="1" fill="#000"/><rect x="637" y="203" width="7" height="1" fill="#000"/></svg>
<div class="btn" style="left:633px;top:141px;width:16px;height:17px"></div>
<div class="dith" style="left:335px;top:213px;width:298px;height:16px"></div>
<div class="btn" style="left:335px;top:213px;width:16px;height:16px"></div>
<svg style="left:0px;top:0px;pointer-events:none;shape-rendering:crispEdges" width="981" height="725" viewBox="0 0 981 725"><rect x="340" y="220" width="1" height="1" fill="#000"/><rect x="341" y="219" width="1" height="3" fill="#000"/><rect x="342" y="218" width="1" height="5" fill="#000"/><rect x="343" y="217" width="1" height="7" fill="#000"/></svg>
<div class="btn" style="left:617px;top:213px;width:16px;height:16px"></div>
<svg style="left:0px;top:0px;pointer-events:none;shape-rendering:crispEdges" width="981" height="725" viewBox="0 0 981 725"><rect x="626" y="220" width="1" height="1" fill="#000"/><rect x="625" y="219" width="1" height="3" fill="#000"/><rect x="624" y="218" width="1" height="5" fill="#000"/><rect x="623" y="217" width="1" height="7" fill="#000"/></svg>
<div class="btn" style="left:351px;top:213px;width:170px;height:16px"></div>
<div style="left:633px;top:213px;width:17px;height:16px;background:#d4d0c8;"></div>
<div style="left:335px;top:232px;width:298px;height:31px;background:#fff;"></div>
<div class="dith" style="left:335px;top:263px;width:298px;height:16px"></div>
<div class="btn" style="left:335px;top:263px;width:16px;height:16px"></div>
<svg style="left:0px;top:0px;pointer-events:none;shape-rendering:crispEdges" width="981" height="725" viewBox="0 0 981 725"><rect x="341" y="271" width="1" height="1" fill="#fff"/><rect x="342" y="270" width="1" height="3" fill="#fff"/><rect x="343" y="269" width="1" height="5" fill="#fff"/><rect x="344" y="268" width="1" height="7" fill="#fff"/><rect x="340" y="270" width="1" height="1" fill="#808080"/><rect x="341" y="269" width="1" height="3" fill="#808080"/><rect x="342" y="268" width="1" height="5" fill="#808080"/><rect x="343" y="267" width="1" height="7" fill="#808080"/></svg>
<div class="btn" style="left:617px;top:263px;width:16px;height:16px"></div>
<svg style="left:0px;top:0px;pointer-events:none;shape-rendering:crispEdges" width="981" height="725" viewBox="0 0 981 725"><rect x="627" y="271" width="1" height="1" fill="#fff"/><rect x="626" y="270" width="1" height="3" fill="#fff"/><rect x="625" y="269" width="1" height="5" fill="#fff"/><rect x="624" y="268" width="1" height="7" fill="#fff"/><rect x="626" y="270" width="1" height="1" fill="#808080"/><rect x="625" y="269" width="1" height="3" fill="#808080"/><rect x="624" y="268" width="1" height="5" fill="#808080"/><rect x="623" y="267" width="1" height="7" fill="#808080"/></svg>
<div style="left:633px;top:232px;width:16px;height:31px;background:#fff;"></div>
<div class="dith" style="left:633px;top:232px;width:16px;height:32px"></div>
<div class="btn" style="left:633px;top:232px;width:16px;height:16px"></div>
<svg style="left:0px;top:0px;pointer-events:none;shape-rendering:crispEdges" width="981" height="725" viewBox="0 0 981 725"><rect x="641" y="239" width="1" height="1" fill="#fff"/><rect x="640" y="240" width="3" height="1" fill="#fff"/><rect x="639" y="241" width="5" height="1" fill="#fff"/><rect x="638" y="242" width="7" height="1" fill="#fff"/><rect x="640" y="238" width="1" height="1" fill="#808080"/><rect x="639" y="239" width="3" height="1" fill="#808080"/><rect x="638" y="240" width="5" height="1" fill="#808080"/><rect x="637" y="241" width="7" height="1" fill="#808080"/></svg>
<div class="btn" style="left:633px;top:248px;width:16px;height:16px"></div>
<svg style="left:0px;top:0px;pointer-events:none;shape-rendering:crispEdges" width="981" height="725" viewBox="0 0 981 725"><rect x="641" y="258" width="1" height="1" fill="#fff"/><rect x="640" y="257" width="3" height="1" fill="#fff"/><rect x="639" y="256" width="5" height="1" fill="#fff"/><rect x="638" y="255" width="7" height="1" fill="#fff"/><rect x="640" y="257" width="1" height="1" fill="#808080"/><rect x="639" y="256" width="3" height="1" fill="#808080"/><rect x="638" y="255" width="5" height="1" fill="#808080"/><rect x="637" y="254" width="7" height="1" fill="#808080"/></svg>
<div style="left:633px;top:263px;width:17px;height:16px;background:#d4d0c8;"></div>
<div style="left:9px;top:309px;width:642px;height:230px;background:#98a6cb;"></div>
<svg style="left:8px;top:286px;" width="644" height="254" viewBox="0 0 644 254"><defs><linearGradient id="ge" x1="0" y1="0" x2="0" y2="1"><stop offset="0" stop-color="#e9edf6"/><stop offset="1" stop-color="#93a2ca"/></linearGradient></defs><path d="M0.5 23.5 V6.5 Q0.5 0.5 6.5 0.5 L94.0 0.5 L94.0 1.5 L96.0 1.5 L97.0 2.5 L99.0 2.5 L100.0 3.5 L101.0 3.5 L103.0 5.5 L104.0 5.5 L105.0 6.5 L116.0 17.5 L117.0 18.5 L118.0 18.5 L120.0 20.5 L121.0 20.5 L122.0 21.5 L124.0 21.5 L125.0 22.5 L127.0 22.5 L128.0 23.5 Z" fill="url(#ge)"/><path d="M0.5 253.5 V6.5 Q0.5 0.5 6.5 0.5 H637.5 Q643.5 0.5 643.5 6.5 V253.5 Z" fill="none" stroke="#868482"/><path d="M94.0 0.5 L94.0 0.5 L94.0 1.5 L96.0 1.5 L97.0 2.5 L99.0 2.5 L100.0 3.5 L101.0 3.5 L103.0 5.5 L104.0 5.5 L105.0 6.5 L116.0 17.5 L117.0 18.5 L118.0 18.5 L120.0 20.5 L121.0 20.5 L122.0 21.5 L124.0 21.5 L125.0 22.5 L127.0 22.5 L128.0 23.5 H643.5" fill="none" stroke="#868482"/><path d="M305.5 0.5 Q310.5 0.5 310.5 5.5 V23.5" fill="none" stroke="#868482"/></svg>
<div style="left:9px;top:309px;width:642px;height:1px;background:#8f9bbd;"></div>
<svg style="left:16px;top:291px;" width="11" height="13" viewBox="0 0 11 13"><path d="M0.5 0.5 H7.5 L10.5 3.5 V12.5 H0.5 Z" fill="#f4f8fe" stroke="#9ab0d0" stroke-width="1"/><path d="M7.5 0.5 V3.5 H10.5" fill="#fdf0c8" stroke="#d8b868" stroke-width=".8"/><path d="M3.2 10.5 V4.5 H6 Q7.8 4.5 7.8 6.2 Q7.8 7.9 6 7.9 H3.2" fill="none" stroke="#3f6cb4" stroke-width="1.3"/></svg>
<span style="left:31.4px;top:290px;font:normal 12px/16px 'Liberation Sans', sans-serif;color:#000;letter-spacing:-0.15px;transform:scaleX(0.9389);transform-origin:0 0;">newfile.php</span>
<svg style="left:96px;top:292px;" width="10" height="10" viewBox="0 0 10 10"><g stroke-linecap="square"><path d="M1.8 1.8 L8.2 8.2 M8.2 1.8 L1.8 8.2" stroke="#303030" stroke-width="3.4"/><path d="M1.8 1.8 L8.2 8.2 M8.2 1.8 L1.8 8.2" stroke="#fff" stroke-width="1.6"/></g></svg>
<svg style="left:133px;top:291px;" width="14" height="14" viewBox="0 0 14 14"><circle cx="7" cy="7" r="6.3" fill="#3f7fd0" stroke="#66748c" stroke-width="1"/><circle cx="5.6" cy="5.2" r="3.8" fill="#86b8f0" opacity=".7"/><path d="M4 2.6 C6 1.6 8 2.6 8.4 4.4 C8 6 6.6 5.6 6.2 7.4 C5.2 8.4 3.6 7 3.2 5.2 Z" fill="#4ea34a"/><path d="M8.4 8 C10.2 7.4 11 9 10.6 10.2 C9.6 11.6 8.4 11 8 9.6 Z" fill="#4ea34a"/><path d="M6 3 L7 5 L6 6" stroke="#f0e060" stroke-width="1" fill="none"/></svg>
<span style="left:150.5px;top:290px;font:normal 12px/16px 'Liberation Sans', sans-serif;color:#000;letter-spacing:0.01px;">http://localhost/newfile.php</span>
<svg style="left:617px;top:291px;" width="10" height="4" viewBox="0 0 10 4"><rect x="0.5" y="0.5" width="9" height="3" fill="#fff" stroke="#404040"/></svg>
<svg style="left:635px;top:291px;" width="10" height="10" viewBox="0 0 10 10"><rect x="0.5" y="0.5" width="9" height="9" fill="#fff" stroke="#404040"/><rect x="0.5" y="0.5" width="9" height="2" fill="#fff" stroke="#404040"/></svg>
<div style="left:11px;top:312px;width:638px;height:225px;background:#d4d0c8;"></div>
<div style="left:11px;top:312px;width:12px;height:102px;background-image:conic-gradient(#0a246a 25%,#e4e6f0 0 50%,#0a246a 0 75%,#e4e6f0 0);background-size:2px 2px"></div>
<div style="left:23px;top:312px;width:597px;height:209px;background:#fff;"></div>
<div style="left:48px;top:312px;width:1px;height:209px;background:#d8d8d8;"></div>
<div style="left:49px;top:346px;width:571px;height:17px;background:#fffcce;"></div>
<svg style="left:11px;top:330px;" width="9" height="13" viewBox="0 0 9 13"><path d="M0 3.5 H3.5 V0.8 L8 6.5 L3.5 12.2 V9.5 H0 Z" fill="#4a8cc8" stroke="#fff" stroke-width="1"/></svg>
<svg style="left:13px;top:348px;" width="10" height="10" viewBox="0 0 10 10"><circle cx="5" cy="5" r="4.2" fill="#5a92c4" stroke="#fff" stroke-width="1.2"/></svg>
<span style="left:50px;top:314px;font:12px/17px 'Liberation Mono', monospace;letter-spacing:0.8px"><span style="position:static;color:#c41818">&lt;?php</span></span>
<span style="left:32px;top:314px;font:12px/17px 'Liberation Mono', monospace;color:#7c7c7c">1</span>
<span style="left:50px;top:331px;font:12px/17px 'Liberation Mono', monospace;letter-spacing:0.8px"><span style="position:static;color:#660000">$i</span><span style="position:static;color:#000"> = </span><span style="position:static;color:#d81808">3</span><span style="position:static;color:#000">;</span></span>
<span style="left:32px;top:331px;font:12px/17px 'Liberation Mono', monospace;color:#7c7c7c">2</span>
<span style="left:50px;top:348px;font:12px/17px 'Liberation Mono', monospace;letter-spacing:0.8px"><span style="position:static;color:#660000">$j</span><span style="position:static;color:#000"> = </span><span style="position:static;color:#d81808">4</span><span style="position:static;color:#000">;</span></span>
<span style="left:32px;top:348px;font:12px/17px 'Liberation Mono', monospace;color:#7c7c7c">3</span>
<span style="left:50px;top:365px;font:12px/17px 'Liberation Mono', monospace;letter-spacing:0.8px"><span style="position:static;color:#660000">$k</span><span style="position:static;color:#000"> = </span><span style="position:static;color:#660000">$i</span><span style="position:static;color:#000"> + </span><span style="position:static;color:#660000">$j</span><span style="position:static;color:#000">;</span></span>
<span style="left:32px;top:365px;font:12px/17px 'Liberation Mono', monospace;color:#7c7c7c">4</span>
<span style="left:50px;top:382px;font:12px/17px 'Liberation Mono', monospace;letter-spacing:0.8px"><span style="position:static;color:#1616b4">echo</span><span style="position:static;color:#000"> </span><span style="position:static;color:#660000">$k</span><span style="position:static;color:#000">;</span></span>
<span style="left:32px;top:382px;font:12px/17px 'Liberation Mono', monospace;color:#7c7c7c">5</span>
<span style="left:50px;top:399px;font:12px/17px 'Liberation Mono', monospace;letter-spacing:0.8px"><span style="position:static;color:#c41818">?&gt;</span></span>
<span style="left:32px;top:399px;font:12px/17px 'Liberation Mono', monospace;color:#7c7c7c">6</span>
<div style="left:105px;top:346px;width:2px;height:16px;background:#000;"></div>
<div class="dith" style="left:620px;top:312px;width:16px;height:209px"></div>
<div class="btn" style="left:620px;top:312px;width:16px;height:16px"></div>
<svg style="left:0px;top:0px;pointer-events:none;shape-rendering:crispEdges" width="981" height="725" viewBox="0 0 981 725"><rect x="628" y="319" width="1" height="1" fill="#fff"/><rect x="627" y="320" width="3" height="1" fill="#fff"/><rect x="626" y="321" width="5" height="1" fill="#fff"/><rect x="625" y="322" width="7" height="1" fill="#fff"/><rect x="627" y="318" width="1" height="1" fill="#808080"/><rect x="626" y="319" width="3" height="1" fill="#808080"/><rect x="625" y="320" width="5" height="1" fill="#808080"/><rect x="624" y="321" width="7" height="1" fill="#808080"/></svg>
<div class="btn" style="left:620px;top:505px;width:16px;height:16px"></div>
<svg style="left:0px;top:0px;pointer-events:none;shape-rendering:crispEdges" width="981" height="725" viewBox="0 0 981 725"><rect x="628" y="515" width="1" height="1" fill="#fff"/><rect x="627" y="514" width="3" height="1" fill="#fff"/><rect x="626" y="513" width="5" height="1" fill="#fff"/><rect x="625" y="512" width="7" height="1" fill="#fff"/><rect x="627" y="514" width="1" height="1" fill="#808080"/><rect x="626" y="513" width="3" height="1" fill="#808080"/><rect x="625" y="512" width="5" height="1" fill="#808080"/><rect x="624" y="511" width="7" height="1" fill="#808080"/></svg>
<div class="dith" style="left:49px;top:521px;width:571px;height:16px"></div>
<div class="btn" style="left:49px;top:521px;width:16px;height:16px"></div>
<svg style="left:0px;top:0px;pointer-events:none;shape-rendering:crispEdges" width="981" height="725" viewBox="0 0 981 725"><rect x="55" y="529" width="1" height="1" fill="#fff"/><rect x="56" y="528" width="1" height="3" fill="#fff"/><rect x="57" y="527" width="1" height="5" fill="#fff"/><rect x="58" y="526" width="1" height="7" fill="#fff"/><rect x="54" y="528" width="1" height="1" fill="#808080"/><rect x="55" y="527" width="1" height="3" fill="#808080"/><rect x="56" y="526" width="1" height="5" fill="#808080"/><rect x="57" y="525" width="1" height="7" fill="#808080"/></svg>
<div class="btn" style="left:604px;top:521px;width:16px;height:16px"></div>
<svg style="left:0px;top:0px;pointer-events:none;shape-rendering:crispEdges" width="981" height="725" viewBox="0 0 981 725"><rect x="614" y="529" width="1" height="1" fill="#fff"/><rect x="613" y="528" width="1" height="3" fill="#fff"/><rect x="612" y="527" width="1" height="5" fill="#fff"/><rect x="611" y="526" width="1" height="7" fill="#fff"/><rect x="613" y="528" width="1" height="1" fill="#808080"/><rect x="612" y="527" width="1" height="3" fill="#808080"/><rect x="611" y="526" width="1" height="5" fill="#808080"/><rect x="610" y="525" width="1" height="7" fill="#808080"/></svg>
<div style="left:620px;top:521px;width:16px;height:16px;background:#d4d0c8;"></div>
<div style="left:636px;top:312px;width:13px;height:225px;background:#d4d0c8;"></div>
<div style="left:638px;top:342px;width:9px;height:5px;background:#f6f6f0;"></div>
<svg style="left:8px;top:543px;" width="644" height="152" viewBox="0 0 644 152"><defs><linearGradient id="gc" x1="0" y1="0" x2="0" y2="1"><stop offset="0" stop-color="#ffffff"/><stop offset="1" stop-color="#d4d0c8"/></linearGradient></defs><path d="M0.5 23.5 V6.5 Q0.5 0.5 6.5 0.5 L79.0 0.5 L79.0 1.5 L81.0 1.5 L82.0 2.5 L84.0 2.5 L85.0 3.5 L86.0 3.5 L88.0 5.5 L89.0 5.5 L90.0 6.5 L101.0 17.5 L102.0 18.5 L103.0 18.5 L105.0 20.5 L106.0 20.5 L107.0 21.5 L109.0 21.5 L110.0 22.5 L112.0 22.5 L113.0 23.5 Z" fill="url(#gc)"/><path d="M0.5 151.5 V6.5 Q0.5 0.5 6.5 0.5 H637.5 Q643.5 0.5 643.5 6.5 V151.5 Z" fill="none" stroke="#868482"/><path d="M79.0 0.5 L79.0 0.5 L79.0 1.5 L81.0 1.5 L82.0 2.5 L84.0 2.5 L85.0 3.5 L86.0 3.5 L88.0 5.5 L89.0 5.5 L90.0 6.5 L101.0 17.5 L102.0 18.5 L103.0 18.5 L105.0 20.5 L106.0 20.5 L107.0 21.5 L109.0 21.5 L110.0 22.5 L112.0 22.5 L113.0 23.5 H643.5" fill="none" stroke="#868482"/><path d="M156.5 0.5 Q161.5 0.5 161.5 5.5 V23.5" fill="none" stroke="#868482"/></svg>
<svg style="left:14px;top:548px;" width="14" height="14" viewBox="0 0 14 14"><rect x="1" y="0.8" width="12" height="9.4" rx="1" fill="#3c68b0" stroke="#28488c" stroke-width=".8"/><rect x="2.6" y="2.4" width="8.8" height="6" fill="#e8f0fc"/><path d="M4 4.5 H9.5 M4 6.5 H8" stroke="#3c68b0" stroke-width="1"/><path d="M5 10.5 H9 V12 H11.5 V13.3 H2.5 V12 H5 Z" fill="#3c68b0"/></svg>
<span style="left:31.6px;top:546.5px;font:normal 12px/16px 'Liberation Sans', sans-serif;color:#000;letter-spacing:-0.15px;transform:scaleX(0.9367);transform-origin:0 0;">Console</span>
<svg style="left:81px;top:549px;" width="10" height="10" viewBox="0 0 10 10"><g stroke-linecap="square"><path d="M1.8 1.8 L8.2 8.2 M8.2 1.8 L1.8 8.2" stroke="#303030" stroke-width="3.4"/><path d="M1.8 1.8 L8.2 8.2 M8.2 1.8 L1.8 8.2" stroke="#fff" stroke-width="1.6"/></g></svg>
<svg style="left:117px;top:547px;" width="15" height="15" viewBox="0 0 15 15"><rect x="4.5" y="3.5" width="9.5" height="11" fill="#fff" stroke="#8a9cc0"/><path d="M7 7 H12 M7 9.5 H12 M7 12 H12" stroke="#8aa4d4" stroke-width="1"/><path d="M1 8 L4 11 L9.5 2.5" stroke="#2c64c0" stroke-width="2" fill="none"/><path d="M9 1 L12 0.5" stroke="#d8a020" stroke-width="1.4"/></svg>
<span style="left:136.5px;top:546.5px;font:normal 12px/16px 'Liberation Sans', sans-serif;color:#000;letter-spacing:-0.15px;transform:scaleX(0.9805);transform-origin:0 0;">Tasks</span>
<svg style="left:340px;top:548px;" width="16" height="16" viewBox="0 0 16 16"><rect x="1.5" y="2.5" width="11" height="11" fill="#e02030" stroke="#b01822" stroke-width="1"/><rect x="3" y="4" width="8" height="3" fill="#f06a70" opacity=".7"/></svg>
<svg style="left:362px;top:548px;" width="16" height="16" viewBox="0 0 16 16"><g stroke="#b6b4ae" stroke-width="3.4" stroke-linecap="butt"><path d="M2.5 3.5 L12.5 13.5 M12.5 3.5 L2.5 13.5"/></g></svg>
<svg style="left:386px;top:548px;" width="16" height="16" viewBox="0 0 16 16"><g stroke="#c6c4be" stroke-width="2.8" stroke-linecap="butt"><path d="M1.5 1.5 L9 9 M9 1.5 L1.5 9"/></g><g stroke="#b2b0aa" stroke-width="3.2" stroke-linecap="butt"><path d="M5.5 6.5 L14.5 15.5 M14.5 6.5 L5.5 15.5"/></g></svg>
<div style="left:409px;top:546px;width:2px;height:18px;background:#9a9892;border-right:1px solid #fff"></div>
<svg style="left:419px;top:548px;" width="16" height="16" viewBox="0 0 16 16"><path d="M0.5 0.5 H7 L9.5 3 V12.5 H0.5 Z" fill="#fff" stroke="#8a9cc0"/><path d="M2 3.5 H7.5 M2 5.5 H7.5 M2 7.5 H7.5 M2 9.5 H6" stroke="#7a9ad4" stroke-width="1"/><path d="M8 8.5 L14.5 15 M14.5 8.5 L8 15" stroke="#333" stroke-width="2.4"/></svg>
<svg style="left:442px;top:548px;" width="17" height="16" viewBox="0 0 17 16"><rect x="4.5" y="0.5" width="8" height="13" fill="#fff" stroke="#a8b4cc"/><rect x="12.5" y="0.5" width="4" height="13" fill="#d6e0f2" stroke="#7a8cb4"/><rect x="13.5" y="2.5" width="2" height="2" fill="#3a5aa0"/><rect x="13.5" y="9.5" width="2" height="2" fill="#3a5aa0"/><rect x="0.5" y="8.5" width="8" height="6.5" rx="1" fill="#f6d848" stroke="#b89a18"/><path d="M2.5 8.5 V6.5 Q2.5 4.5 4.5 4.5 Q6.5 4.5 6.5 6.5 V8.5" fill="none" stroke="#b89a18" stroke-width="1.2"/><rect x="4" y="10.5" width="1.4" height="2.5" fill="#6a5408"/></svg>
<div class="dith" style="left:462px;top:544px;width:24px;height:21px;border:1px solid;border-color:#808080 #fff #fff #808080"></div>
<div class="dith" style="left:486px;top:544px;width:24px;height:21px;border:1px solid;border-color:#808080 #fff #fff #808080"></div>
<svg style="left:467px;top:549px;" width="16" height="16" viewBox="0 0 16 16"><rect x="0.8" y="5.2" width="8" height="6.4" rx="1" fill="#d4e0f4" stroke="#5a7cbc" stroke-width="1.1"/><path d="M2.8 13.2 H7 V14.6 H2.8 Z M4.2 11.8 V13" stroke="#5a7cbc" fill="#5a7cbc" stroke-width=".9"/><rect x="4.5" y="0.6" width="11" height="8" rx="1" fill="#f4f8fe" stroke="#5a7cbc" stroke-width="1.1"/><path d="M7 3.5 H13 M7 5.7 H11.5" stroke="#4a70b4" stroke-width="1"/></svg>
<svg style="left:491px;top:549px;" width="16" height="16" viewBox="0 0 16 16"><rect x="0.8" y="5.2" width="8" height="6.4" rx="1" fill="#d4e0f4" stroke="#5a7cbc" stroke-width="1.1"/><path d="M2.8 13.2 H7 V14.6 H2.8 Z M4.2 11.8 V13" stroke="#5a7cbc" fill="#5a7cbc" stroke-width=".9"/><rect x="4.5" y="0.6" width="11" height="8" rx="1" fill="#f4f8fe" stroke="#5a7cbc" stroke-width="1.1"/><path d="M6.6 2.4 L10.2 6.6 M10.2 2.4 L6.6 6.6" stroke="#d42838" stroke-width="1.5"/><path d="M11.8 3.5 H13.8 M11.8 5.7 H13.8" stroke="#4a70b4" stroke-width="1"/></svg>
<div style="left:513px;top:546px;width:2px;height:18px;background:#9a9892;border-right:1px solid #fff"></div>
<svg style="left:523px;top:545px;" width="16" height="16" viewBox="0 0 16 16"><rect x="0.5" y="6.5" width="11" height="8" fill="#fff" stroke="#8a9cc0"/><rect x="0.5" y="6.5" width="11" height="2.5" fill="#4a73b8"/><path d="M7.5 8.5 L9 5 L13 1 L15.2 3.2 L11.2 7.2 Z" fill="#38a838" stroke="#1c6e20" stroke-width=".8"/></svg>
<svg style="left:548px;top:547.5px;" width="15" height="15" viewBox="0 0 15 15"><rect x="0.8" y="0.8" width="13" height="10" rx="1" fill="#3c68b0" stroke="#28488c" stroke-width=".8"/><rect x="2.6" y="2.6" width="9.4" height="6.2" fill="#e8f0fc"/><path d="M4 4.8 H10 M4 6.8 H8.5" stroke="#3c68b0" stroke-width="1"/><path d="M5.5 11 H9.5 V12.6 H12 V14 H3 V12.6 H5.5 Z" fill="#3c68b0"/></svg>
<svg style="left:569px;top:553px;" width="5" height="3" viewBox="0 0 5 3"><path d="M0 0 H5 L2.5 3 Z" fill="#000"/></svg>
<svg style="left:582px;top:547px;" width="16" height="16" viewBox="0 0 16 16"><rect x="1.5" y="2.5" width="12" height="12" fill="#fffef0" stroke="#9aa7c4"/><rect x="1" y="2" width="10" height="3" fill="#4a73b8"/><rect x="2" y="6" width="11" height="8" fill="#eef4fb"/><path d="M8 12 L13 12 L13 7 Z" fill="#fff6c0"/><path d="M12.5 0 V7 M9 3.5 H16" stroke="#e0b418" stroke-width="1.3"/><path d="M11.5 2.5 L13.5 4.5 M13.5 2.5 L11.5 4.5" stroke="#f0d050" stroke-width="0.9"/><circle cx="12.5" cy="3.5" r="1" fill="#fffbd0"/></svg>
<svg style="left:604px;top:553px;" width="5" height="3" viewBox="0 0 5 3"><path d="M0 0 H5 L2.5 3 Z" fill="#000"/></svg>
<svg style="left:617px;top:548px;" width="10" height="4" viewBox="0 0 10 4"><rect x="0.5" y="0.5" width="9" height="3" fill="#fff" stroke="#404040"/></svg>
<svg style="left:635px;top:548px;" width="10" height="10" viewBox="0 0 10 10"><rect x="0.5" y="0.5" width="9" height="9" fill="#fff" stroke="#404040"/><rect x="0.5" y="0.5" width="9" height="2" fill="#fff" stroke="#404040"/></svg>
<span style="left:10.6px;top:566.5px;font:normal 12px/16px 'Liberation Sans', sans-serif;color:#000;letter-spacing:-0.15px;transform:scaleX(0.9627);transform-origin:0 0;">newfile</span>
<span style="left:52.2px;top:566.5px;font:normal 12px/16px 'Liberation Sans', sans-serif;color:#000;letter-spacing:-0.15px;transform:scaleX(0.8307);transform-origin:0 0;">[PHP</span>
<span style="left:81.6px;top:566.5px;font:normal 12px/16px 'Liberation Sans', sans-serif;color:#000;letter-spacing:-0.15px;transform:scaleX(0.7944);transform-origin:0 0;">Web</span>
<span style="left:107.3px;top:566.5px;font:normal 12px/16px 'Liberation Sans', sans-serif;color:#000;letter-spacing:-0.15px;transform:scaleX(0.855);transform-origin:0 0;">Page]</span>
<span style="left:138.7px;top:566.5px;font:normal 12px/16px 'Liberation Sans', sans-serif;color:#000;letter-spacing:-0.04px;">http://localhost/newfile.php</span>
<div style="left:11px;top:582px;width:639px;height:1px;background:#808080;"></div>
<div style="left:11px;top:583px;width:622px;height:93px;background:#fff;"></div>
<div class="dith" style="left:633px;top:583px;width:16px;height:93px"></div>
<div class="btn" style="left:633px;top:583px;width:16px;height:16px"></div>
<svg style="left:0px;top:0px;pointer-events:none;shape-rendering:crispEdges" width="981" height="725" viewBox="0 0 981 725"><rect x="641" y="590" width="1" height="1" fill="#fff"/><rect x="640" y="591" width="3" height="1" fill="#fff"/><rect x="639" y="592" width="5" height="1" fill="#fff"/><rect x="638" y="593" width="7" height="1" fill="#fff"/><rect x="640" y="589" width="1" height="1" fill="#808080"/><rect x="639" y="590" width="3" height="1" fill="#808080"/><rect x="638" y="591" width="5" height="1" fill="#808080"/><rect x="637" y="592" width="7" height="1" fill="#808080"/></svg>
<div class="btn" style="left:633px;top:660px;width:16px;height:16px"></div>
<svg style="left:0px;top:0px;pointer-events:none;shape-rendering:crispEdges" width="981" height="725" viewBox="0 0 981 725"><rect x="641" y="670" width="1" height="1" fill="#fff"/><rect x="640" y="669" width="3" height="1" fill="#fff"/><rect x="639" y="668" width="5" height="1" fill="#fff"/><rect x="638" y="667" width="7" height="1" fill="#fff"/><rect x="640" y="669" width="1" height="1" fill="#808080"/><rect x="639" y="668" width="3" height="1" fill="#808080"/><rect x="638" y="667" width="5" height="1" fill="#808080"/><rect x="637" y="666" width="7" height="1" fill="#808080"/></svg>
<div class="dith" style="left:11px;top:676px;width:622px;height:16px"></div>
<div class="btn" style="left:11px;top:676px;width:16px;height:16px"></div>
<svg style="left:0px;top:0px;pointer-events:none;shape-rendering:crispEdges" width="981" height="725" viewBox="0 0 981 725"><rect x="17" y="684" width="1" height="1" fill="#fff"/><rect x="18" y="683" width="1" height="3" fill="#fff"/><rect x="19" y="682" width="1" height="5" fill="#fff"/><rect x="20" y="681" width="1" height="7" fill="#fff"/><rect x="16" y="683" width="1" height="1" fill="#808080"/><rect x="17" y="682" width="1" height="3" fill="#808080"/><rect x="18" y="681" width="1" height="5" fill="#808080"/><rect x="19" y="680" width="1" height="7" fill="#808080"/></svg>
<div class="btn" style="left:617px;top:676px;width:16px;height:16px"></div>
<svg style="left:0px;top:0px;pointer-events:none;shape-rendering:crispEdges" width="981" height="725" viewBox="0 0 981 725"><rect x="627" y="684" width="1" height="1" fill="#fff"/><rect x="626" y="683" width="1" height="3" fill="#fff"/><rect x="625" y="682" width="1" height="5" fill="#fff"/><rect x="624" y="681" width="1" height="7" fill="#fff"/><rect x="626" y="683" width="1" height="1" fill="#808080"/><rect x="625" y="682" width="1" height="3" fill="#808080"/><rect x="624" y="681" width="1" height="5" fill="#808080"/><rect x="623" y="680" width="1" height="7" fill="#808080"/></svg>
<div style="left:633px;top:676px;width:17px;height:16px;background:#d4d0c8;"></div>
<svg style="left:655px;top:75px;" width="318" height="620" viewBox="0 0 318 620"><defs><linearGradient id="gr" x1="0" y1="0" x2="0" y2="1"><stop offset="0" stop-color="#ffffff"/><stop offset="1" stop-color="#d4d0c8"/></linearGradient></defs><path d="M98.5 23.5 V6.5 Q98.5 0.5 104.5 0.5 L216.0 0.5 L216.0 1.5 L218.0 1.5 L219.0 2.5 L221.0 2.5 L222.0 3.5 L223.0 3.5 L225.0 5.5 L226.0 5.5 L227.0 6.5 L238.0 17.5 L239.0 18.5 L240.0 18.5 L242.0 20.5 L243.0 20.5 L244.0 21.5 L246.0 21.5 L247.0 22.5 L249.0 22.5 L250.0 23.5 Z" fill="url(#gr)"/><path d="M0.5 23.5 H98.5 V6.5 Q98.5 0.5 104.5 0.5" fill="none" stroke="#868482"/><path d="M0.5 619.5 V6.5 Q0.5 0.5 6.5 0.5 H311.5 Q317.5 0.5 317.5 6.5 V619.5 Z" fill="none" stroke="#868482"/><path d="M216.0 0.5 L216.0 0.5 L216.0 1.5 L218.0 1.5 L219.0 2.5 L221.0 2.5 L222.0 3.5 L223.0 3.5 L225.0 5.5 L226.0 5.5 L227.0 6.5 L238.0 17.5 L239.0 18.5 L240.0 18.5 L242.0 20.5 L243.0 20.5 L244.0 21.5 L246.0 21.5 L247.0 22.5 L249.0 22.5 L250.0 23.5 H317.5" fill="none" stroke="#868482"/></svg>
<svg style="left:662px;top:80px;" width="11" height="13" viewBox="0 0 11 13"><path d="M0.5 0.5 H7.5 L10.5 3.5 V12.5 H0.5 Z" fill="#f4f8fe" stroke="#9ab0d0" stroke-width="1"/><path d="M7.5 0.5 V3.5 H10.5" fill="#fdf0c8" stroke="#d8b868" stroke-width=".8"/><path d="M3.2 10.5 V4.5 H6 Q7.8 4.5 7.8 6.2 Q7.8 7.9 6 7.9 H3.2" fill="none" stroke="#3f6cb4" stroke-width="1.3"/></svg>
<span style="left:679.8px;top:79px;font:normal 12px/16px 'Liberation Sans', sans-serif;color:#000;letter-spacing:-0.15px;transform:scaleX(0.8656);transform-origin:0 0;">Debug</span>
<span style="left:714.9px;top:79px;font:normal 12px/16px 'Liberation Sans', sans-serif;color:#000;letter-spacing:-0.15px;transform:scaleX(0.9495);transform-origin:0 0;">Output</span>
<svg style="left:760px;top:80px;" width="11" height="13" viewBox="0 0 11 13"><path d="M0.5 0.5 H7.5 L10.5 3.5 V12.5 H0.5 Z" fill="#f4f8fe" stroke="#9ab0d0" stroke-width="1"/><path d="M7.5 0.5 V3.5 H10.5" fill="#fdf0c8" stroke="#d8b868" stroke-width=".8"/><path d="M3.2 10.5 V4.5 H6 Q7.8 4.5 7.8 6.2 Q7.8 7.9 6 7.9 H3.2" fill="none" stroke="#3f6cb4" stroke-width="1.3"/></svg>
<span style="left:777px;top:79px;font:normal 12px/16px 'Liberation Sans', sans-serif;color:#000;letter-spacing:-0.15px;transform:scaleX(0.9393);transform-origin:0 0;">Browser</span>
<span style="left:822.5px;top:79px;font:normal 12px/16px 'Liberation Sans', sans-serif;color:#000;letter-spacing:-0.15px;transform:scaleX(0.958);transform-origin:0 0;">Output</span>
<svg style="left:865px;top:82px;" width="10" height="10" viewBox="0 0 10 10"><g stroke-linecap="square"><path d="M1.8 1.8 L8.2 8.2 M8.2 1.8 L1.8 8.2" stroke="#303030" stroke-width="3.4"/><path d="M1.8 1.8 L8.2 8.2 M8.2 1.8 L1.8 8.2" stroke="#fff" stroke-width="1.6"/></g></svg>
<svg style="left:938px;top:80px;" width="10" height="4" viewBox="0 0 10 4"><rect x="0.5" y="0.5" width="9" height="3" fill="#fff" stroke="#404040"/></svg>
<svg style="left:956px;top:80px;" width="10" height="10" viewBox="0 0 10 10"><rect x="0.5" y="0.5" width="9" height="9" fill="#fff" stroke="#404040"/><rect x="0.5" y="0.5" width="9" height="2" fill="#fff" stroke="#404040"/></svg>
<div style="left:658px;top:101px;width:296px;height:591px;background:#fff;"></div>
<div class="dith" style="left:954px;top:101px;width:16px;height:591px"></div>
<div class="btn" style="left:954px;top:101px;width:16px;height:16px"></div>
<svg style="left:0px;top:0px;pointer-events:none;shape-rendering:crispEdges" width="981" height="725" viewBox="0 0 981 725"><rect x="962" y="108" width="1" height="1" fill="#fff"/><rect x="961" y="109" width="3" height="1" fill="#fff"/><rect x="960" y="110" width="5" height="1" fill="#fff"/><rect x="959" y="111" width="7" height="1" fill="#fff"/><rect x="961" y="107" width="1" height="1" fill="#808080"/><rect x="960" y="108" width="3" height="1" fill="#808080"/><rect x="959" y="109" width="5" height="1" fill="#808080"/><rect x="958" y="110" width="7" height="1" fill="#808080"/></svg>
<div class="btn" style="left:954px;top:676px;width:16px;height:16px"></div>
<svg style="left:0px;top:0px;pointer-events:none;shape-rendering:crispEdges" width="981" height="725" viewBox="0 0 981 725"><rect x="962" y="686" width="1" height="1" fill="#fff"/><rect x="961" y="685" width="3" height="1" fill="#fff"/><rect x="960" y="684" width="5" height="1" fill="#fff"/><rect x="959" y="683" width="7" height="1" fill="#fff"/><rect x="961" y="685" width="1" height="1" fill="#808080"/><rect x="960" y="684" width="3" height="1" fill="#808080"/><rect x="959" y="683" width="5" height="1" fill="#808080"/><rect x="958" y="682" width="7" height="1" fill="#808080"/></svg>
<div style="left:10px;top:698px;width:3px;height:19px;background:#d4d0c8;border-left:1px solid #fff;border-top:1px solid #fff;border-right:1px solid #808080;border-bottom:1px solid #808080"></div>
<svg style="left:25px;top:702px;" width="14" height="13" viewBox="0 0 14 13"><rect x="0.8" y="1.8" width="5.4" height="10.4" fill="#fff" stroke="#7f93c0" stroke-width="1"/><rect x="0.5" y="1.5" width="6" height="2.4" fill="#3c62a8"/><path d="M10 0 V6 M7 3 H13" stroke="#e0b820" stroke-width="1.6"/><path d="M10 1.4 V4.6 M8.4 3 H11.6" stroke="#fff8b0" stroke-width=".7"/></svg>
<svg style="left:86px;top:704px;" width="15" height="9" viewBox="0 0 15 9"><path d="M5 0.5 L1 4.5 L5 8.5 M10 0.5 L14 4.5 L10 8.5" stroke="#3c6aa8" stroke-width="1.2" fill="none"/></svg>
<span style="left:107px;top:700px;font:normal 12px/16px 'Liberation Sans', sans-serif;color:#000;letter-spacing:-0.15px;transform:scaleX(0.8611);transform-origin:0 0;">PHP</span>
<div style="left:296px;top:698px;width:162px;height:19px;border:1px solid;border-color:#808080 #fff #fff #808080"></div>
<div style="left:298px;top:700px;width:9px;height:15px;background:#0a246a;"></div>
<div style="left:309px;top:700px;width:9px;height:15px;background:#0a246a;"></div>
<div style="left:320px;top:700px;width:9px;height:15px;background:#0a246a;"></div>
<div style="left:460px;top:698px;width:2px;height:19px;background:#808080;border-right:1px solid #fff"></div>
<div style="left:550px;top:698px;width:2px;height:19px;background:#808080;border-right:1px solid #fff"></div>
<div style="left:634px;top:698px;width:2px;height:19px;background:#808080;border-right:1px solid #fff"></div>
<span style="left:469.5px;top:700px;font:normal 12px/16px 'Liberation Sans', sans-serif;color:#000;letter-spacing:-0.15px;transform:scaleX(0.924);transform-origin:0 0;">Writable</span>
<span style="left:557.6px;top:700px;font:normal 12px/16px 'Liberation Sans', sans-serif;color:#000;letter-spacing:-0.15px;transform:scaleX(0.904);transform-origin:0 0;">Smart</span>
<span style="left:591.3px;top:700px;font:normal 12px/16px 'Liberation Sans', sans-serif;color:#000;letter-spacing:-0.15px;transform:scaleX(0.9704);transform-origin:0 0;">Insert</span>
<span style="left:642px;top:700px;font:normal 12px/16px 'Liberation Sans', sans-serif;color:#000;">3</span>
<span style="left:650.6px;top:700px;font:normal 12px/16px 'Liberation Sans', sans-serif;color:#000;">:</span>
<span style="left:657.6px;top:700px;font:normal 12px/16px 'Liberation Sans', sans-serif;color:#000;">8</span>
<div style="left:719px;top:698px;width:3px;height:19px;background:#d4d0c8;border-left:1px solid #fff;border-top:1px solid #fff;border-right:1px solid #808080;border-bottom:1px solid #808080"></div>
</body></html>
